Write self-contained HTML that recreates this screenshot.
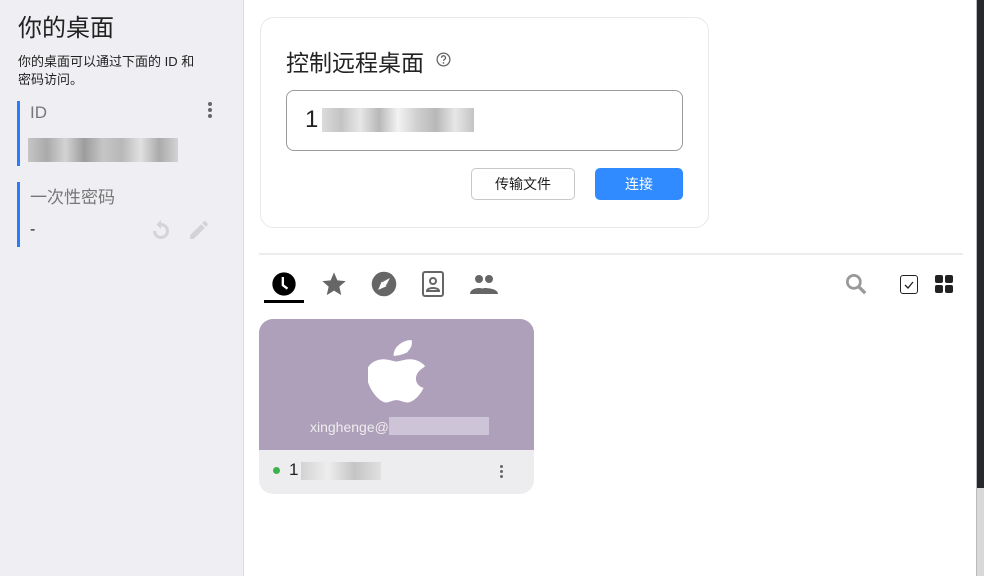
<!DOCTYPE html>
<html><head><meta charset="utf-8"><style>
*{margin:0;padding:0;box-sizing:border-box}
body{width:984px;height:576px;overflow:hidden;position:relative;background:#fff;font-family:"Liberation Sans","Noto Sans CJK SC",sans-serif;color:#222}
.abs{position:absolute}
#left{left:0;top:0;width:244px;height:576px;background:#efeff3;border-right:1px solid #dcdce0}
</style></head><body>
<div id="left" class="abs">
 <div class="abs" style="left:18px;top:8px;font-size:24px;color:#222">你的桌面</div>
 <div class="abs" style="left:18px;top:53px;font-size:13px;line-height:18px;color:#222;width:210px">你的桌面可以通过下面的 ID 和<br>密码访问。</div>
 <div class="abs" style="left:17px;top:101px;width:3px;height:65px;background:#2a7cff"></div>
 <div class="abs" style="left:30px;top:103px;font-size:17px;color:#777">ID</div>
 <div class="abs" style="left:208px;top:102px;width:4px;height:18px">
  <div class="abs" style="left:0;top:0;width:4px;height:4px;border-radius:2px;background:#666"></div>
  <div class="abs" style="left:0;top:6px;width:4px;height:4px;border-radius:2px;background:#666"></div>
  <div class="abs" style="left:0;top:12px;width:4px;height:4px;border-radius:2px;background:#666"></div>
 </div>
 <div class="abs" style="left:28px;top:138px;width:150px;height:24px;background:linear-gradient(90deg,#bbb,#999,#ccc,#888,#bbb,#aaa,#ddd,#999,#ccc);opacity:.8"></div>
 <div class="abs" style="left:17px;top:182px;width:3px;height:65px;background:#2a7cff"></div>
 <div class="abs" style="left:30px;top:183px;font-size:17px;color:#777">一次性密码</div>
 <div class="abs" style="left:30px;top:221px;font-size:16px;color:#222">-</div>
 <svg class="abs" style="left:149px;top:219px" width="24" height="24" viewBox="0 0 24 24"><path d="M12 4V1L7.5 5.5 12 10V7a5 5 0 1 1-5 5H4a8 8 0 1 0 8-8z" fill="#d4d4d8"/></svg>
 <svg class="abs" style="left:187px;top:218px" width="24" height="24" viewBox="0 0 24 24"><path d="M3 17.25V21h3.75L17.8 9.94l-3.75-3.75L3 17.25zM20.7 7.04a1 1 0 0 0 0-1.41l-2.34-2.34a1 1 0 0 0-1.41 0l-1.83 1.83 3.75 3.75 1.83-1.83z" fill="#d4d4d8"/></svg>
</div>
<div class="abs" style="left:260px;top:17px;width:449px;height:211px;background:#fff;border:1px solid #e8e8ec;border-radius:14px"></div>
<div class="abs" style="left:286px;top:44px;font-size:23px;color:#222">控制远程桌面</div>
<svg class="abs" style="left:435px;top:51px" width="17" height="17" viewBox="0 0 20 20"><circle cx="10" cy="10" r="7.5" fill="none" stroke="#666" stroke-width="1.5"/><path d="M7.7 8a2.3 2.3 0 1 1 3.3 2c-.7.4-1 .8-1 1.6" fill="none" stroke="#666" stroke-width="1.5"/><circle cx="10" cy="14" r="1" fill="#666"/></svg>
<div class="abs" style="left:286px;top:90px;width:397px;height:61px;border:1px solid #9a9a9e;border-radius:8px;background:#fff"></div>
<div class="abs" style="left:305px;top:106px;font-size:24px;color:#222">1</div>
<div class="abs" style="left:322px;top:108px;width:152px;height:24px;background:linear-gradient(90deg,#ccc,#aaa,#ddd,#999,#eee,#bbb,#999,#ddd,#aaa);opacity:.7"></div>
<div class="abs" style="left:471px;top:168px;width:104px;height:32px;border:1px solid #c8c8cc;border-radius:5px;background:#fff;font-size:14px;text-align:center;line-height:30px;color:#222">传输文件</div>
<div class="abs" style="left:595px;top:168px;width:88px;height:32px;border-radius:5px;background:#2f8bff;font-size:14px;text-align:center;line-height:32px;color:#fff">连接</div>
<div class="abs" style="left:259px;top:253px;width:704px;height:2px;background:#ececee"></div>
<svg class="abs" style="left:270px;top:270px" width="28" height="28" viewBox="0 0 24 24"><circle cx="12" cy="12" r="10" fill="#000"/><path d="M11 6v7l4 3" stroke="#fff" stroke-width="2" fill="none"/></svg>
<div class="abs" style="left:264px;top:300px;width:40px;height:3px;background:#000"></div>
<svg class="abs" style="left:320px;top:270px" width="28" height="28" viewBox="0 0 24 24"><path d="M12 2l2.9 6.9 7.1.6-5.4 4.7 1.6 7.3L12 17.7 5.8 21.5l1.6-7.3L2 9.5l7.1-.6z" fill="#666"/></svg>
<svg class="abs" style="left:370px;top:270px" width="28" height="28" viewBox="0 0 24 24"><circle cx="12" cy="12" r="10.5" fill="#666"/><path d="M17 7l-3 7-7 3 3-7z" fill="#fff"/><path d="M17 7l-7 3 4 4z" fill="#666"/><path d="M17 7l-3.5 6.5-3-3z" fill="#fff"/></svg>
<div class="abs" style="left:422px;top:271px;width:22px;height:26px;border:2.5px solid #666;border-radius:3px"></div>
<svg class="abs" style="left:424px;top:274px" width="18" height="20" viewBox="0 0 18 20"><circle cx="9" cy="7" r="3" fill="none" stroke="#666" stroke-width="2"/><path d="M3 17c0-4 12-4 12 0z" fill="none" stroke="#666" stroke-width="2"/></svg>
<svg class="abs" style="left:469px;top:270px" width="30" height="28" viewBox="0 0 30 28"><circle cx="10" cy="9" r="4" fill="#666"/><circle cx="20" cy="9" r="4" fill="#666"/><path d="M1 24c0-8 18-8 18 0z M12 24c0-3 1-5 3-6 5 0 14 1 14 6z" fill="#666"/></svg>
<svg class="abs" style="left:843px;top:271px" width="26" height="26" viewBox="0 0 24 24"><circle cx="10" cy="10" r="6" fill="none" stroke="#999" stroke-width="2.5"/><path d="M14.5 14.5l6 6" stroke="#999" stroke-width="3"/></svg>
<div class="abs" style="left:900px;top:275px;width:18px;height:19px;border:1.5px solid #222;border-radius:3px"></div>
<svg class="abs" style="left:902px;top:278px" width="14" height="14" viewBox="0 0 14 14"><path d="M3 7l3 3 5-6" stroke="#222" stroke-width="1.3" fill="none"/></svg>
<div class="abs" style="left:935px;top:275px;width:8px;height:8px;background:#222;border-radius:2px"></div>
<div class="abs" style="left:945px;top:275px;width:8px;height:8px;background:#222;border-radius:2px"></div>
<div class="abs" style="left:935px;top:285px;width:8px;height:8px;background:#222;border-radius:2px"></div>
<div class="abs" style="left:945px;top:285px;width:8px;height:8px;background:#222;border-radius:2px"></div>
<div class="abs" style="left:259px;top:319px;width:275px;height:175px;border-radius:14px;overflow:hidden;background:#ededf0">
 <div class="abs" style="left:0;top:0;width:275px;height:131px;background:#ae9fba"></div>
 <svg class="abs" style="left:109px;top:21px" width="57" height="67" viewBox="9 2 38 59" preserveAspectRatio="none"><path d="M41 36c0-7 6-10 6-11-3-5-8-6-10-6-4 0-7 2-9 2s-5-2-9-2c-5 0-11 4-11 13 0 11 8 25 13 25 3 0 4-2 7-2 3 0 4 2 7 2 5 0 10-9 11-13-1 0-5-2-5-8zM35 13c2-3 4-6 3-11-3 0-7 2-9 5-2 2-3 6-3 9 4 0 7-2 9-3z" fill="#fff"/></svg>
 <div class="abs" style="left:51px;top:100px;font-size:14px;color:#eee">xinghenge@</div>
 <div class="abs" style="left:130px;top:98px;width:100px;height:18px;background:#d6cde0;opacity:.8"></div>
 <div class="abs" style="left:14px;top:148px;width:7px;height:7px;border-radius:4px;background:#3cb34a"></div>
 <div class="abs" style="left:30px;top:141px;font-size:17px;color:#222">1</div>
 <div class="abs" style="left:42px;top:143px;width:80px;height:18px;background:linear-gradient(90deg,#ccc,#eee,#bbb,#ddd);opacity:.8"></div>
 <div class="abs" style="left:241px;top:146px;width:3px;height:3px;border-radius:2px;background:#666"></div>
 <div class="abs" style="left:241px;top:151px;width:3px;height:3px;border-radius:2px;background:#666"></div>
 <div class="abs" style="left:241px;top:156px;width:3px;height:3px;border-radius:2px;background:#666"></div>
</div>
<div class="abs" style="left:976px;top:0;width:1px;height:576px;background:#bbb"></div>
<div class="abs" style="left:977px;top:0;width:7px;height:488px;background:#26282c"></div>
<div class="abs" style="left:977px;top:488px;width:7px;height:88px;background:#d8d8d8"></div>
</body></html>
